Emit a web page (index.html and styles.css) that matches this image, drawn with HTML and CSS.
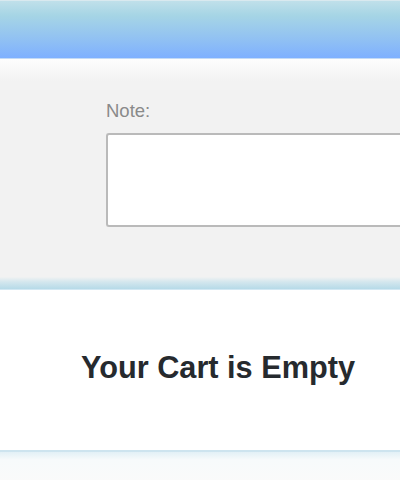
FILE: index.html
```html
<!DOCTYPE html>
<html>
<head>
<meta charset="utf-8">
<link rel="stylesheet" href="styles.css">
</head>
<body>
<div class="page">
  <header class="topbar"></header>
  <section class="notes">
    <label class="note-label" for="note">Note:</label>
    <textarea id="note" class="note-box"></textarea>
  </section>
  <div class="band"></div>
  <section class="cart">
    <h1 class="cart-title">Your Cart is Empty</h1>
  </section>
  <footer class="bottom"></footer>
</div>
</body>
</html>
```
FILE: styles.css
```css
html, body {
  margin: 0;
  padding: 0;
  width: 400px;
  height: 480px;
  overflow: hidden;
  background: #ffffff;
  font-family: "Liberation Sans", Arial, sans-serif;
}
.page {
  display: flex;
  flex-direction: column;
  width: 400px;
}
.topbar {
  height: 57px;
  border-top: 1px solid #d9e9ef;
  border-bottom: 1px solid #c3daf6;
  background: linear-gradient(to bottom, #c0e0ea 0%, #a6d5e5 25%, #92c2f2 65%, #7eb0ff 100%);
}
.notes {
  display: flex;
  flex-direction: column;
  align-items: flex-start;
  padding: 42px 0 50px 106px;
  background: linear-gradient(to bottom, #fdfdfd 0px, #f2f2f2 22px, #f2f2f2 100%);
}
.note-label {
  font-size: 18.5px;
  line-height: 20px;
  color: #8a8a8a;
  margin-bottom: 12px;
}
.note-box {
  box-sizing: border-box;
  width: 294px;
  height: 94px;
  margin: 0;
  border: 2px solid #bababa;
  border-right: none;
  border-radius: 3px 0 0 3px;
  background: #ffffff;
  resize: none;
  outline: none;
}
.band {
  height: 12px;
  border-bottom: 1px solid #d2e8f3;
  background: linear-gradient(to bottom, #f1f2f2 0%, #d4e7ee 40%, #b6dae8 100%);
}
.cart {
  height: 160px;
  box-sizing: border-box;
  padding: 60px 0 0 36px;
  background: #ffffff;
}
.cart-title {
  margin: 0;
  text-align: center;
  font-size: 30.7px;
  line-height: normal;
  font-weight: bold;
  color: #262a2e;
}
.bottom {
  height: 30px;
  border-top: 2px solid #cde4ef;
  background: linear-gradient(to bottom, #e2f0f6 0px, #f7fafb 8px, #fafafa 100%);
}
```
